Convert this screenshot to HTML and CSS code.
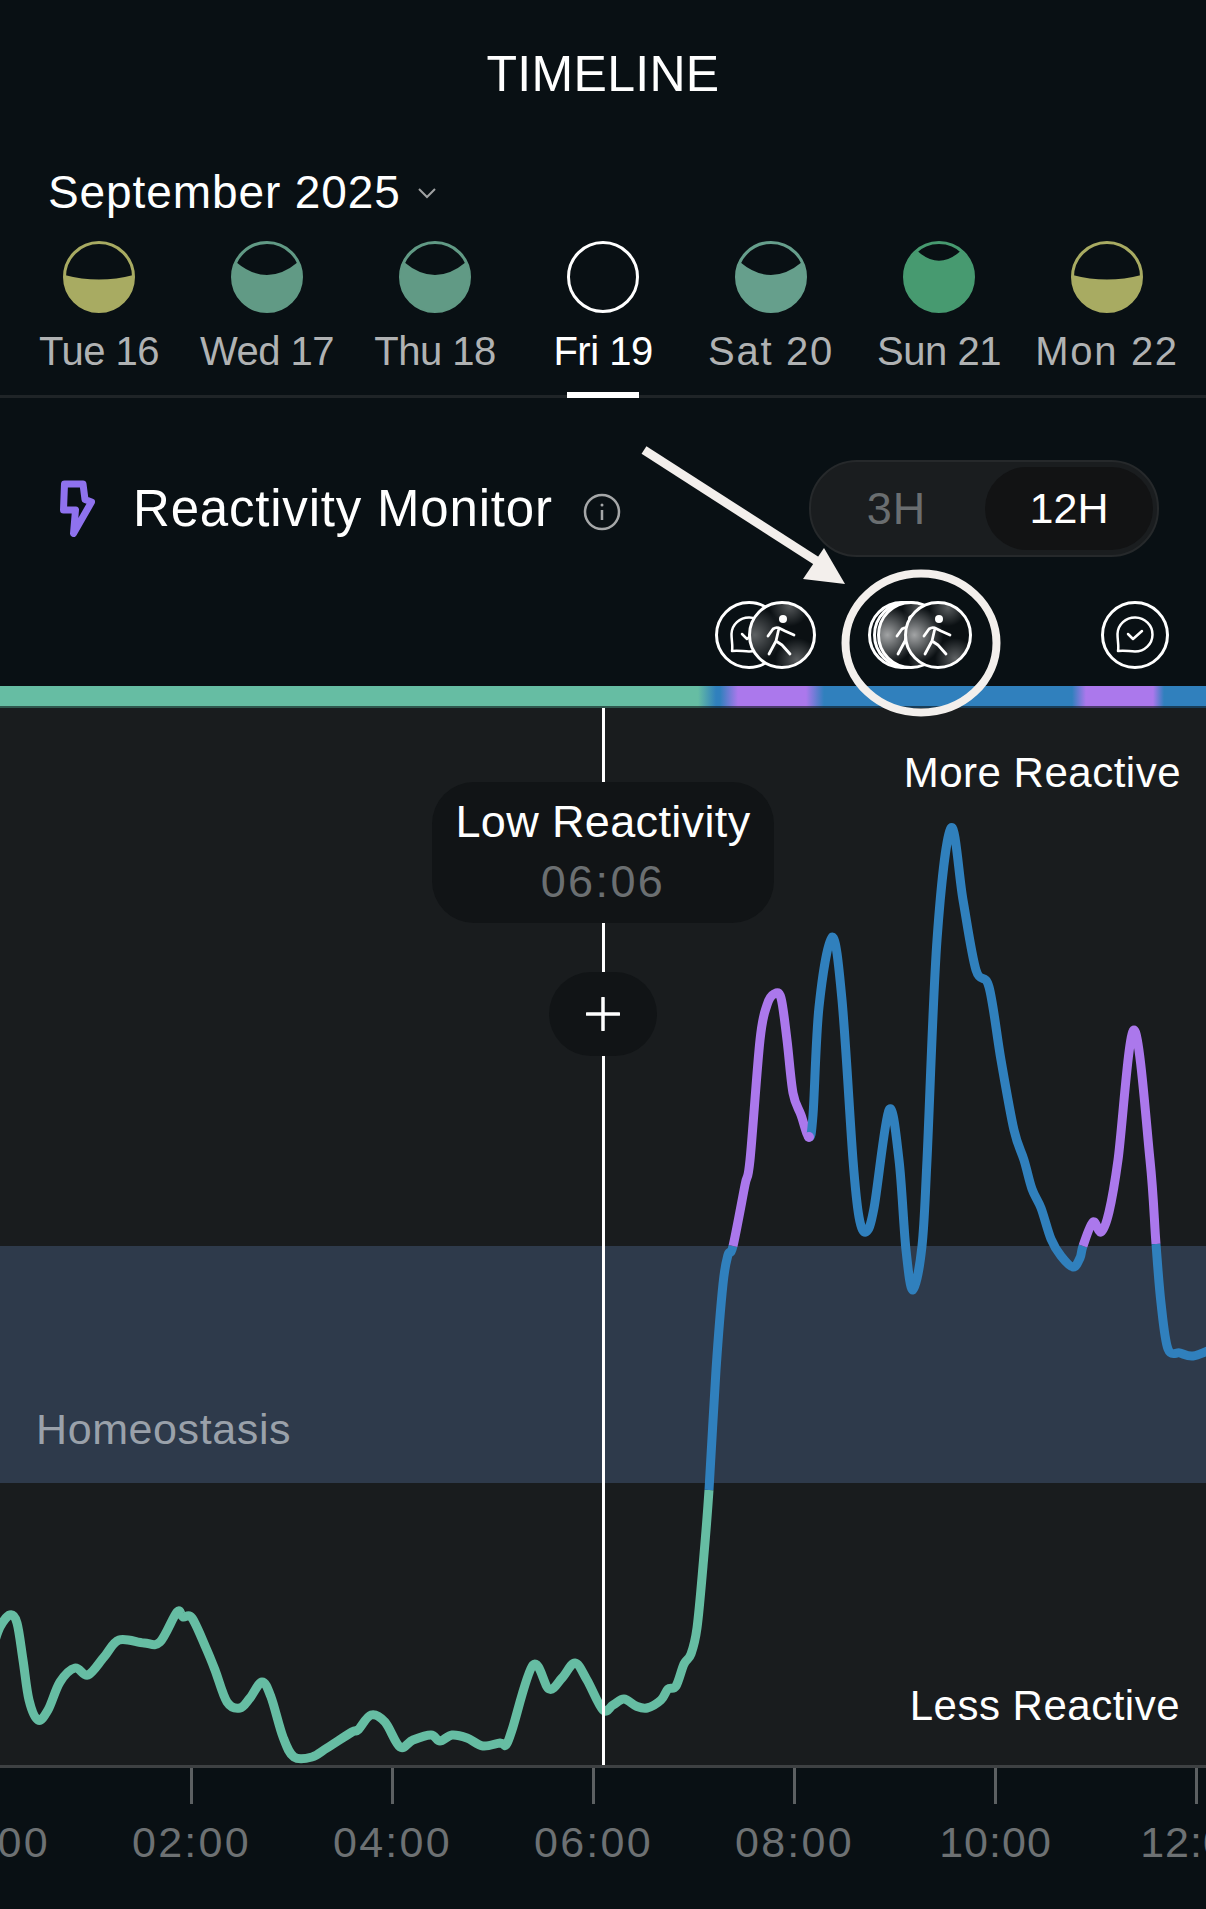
FILE: index.html
```html
<!DOCTYPE html>
<html lang="en">
<head>
  <meta charset="UTF-8" />
  <meta name="viewport" content="width=device-width, initial-scale=1.0"/>
  <title>Timeline</title>
  <link rel="stylesheet" href="styles.css">
</head>
<body>
  <div class="page">
    <h1 class="title">TIMELINE</h1>

    <div class="month">
      <span>September 2025</span>
      <svg class="chevron" width="18" height="11" viewBox="0 0 18 11"><path d="M1 1l8 8 8-8"/></svg>
    </div>

    <div class="days">
      <div class="day">
        <svg class="moon moon-yellow" viewBox="0 0 72 72"><circle cx="36" cy="36" r="34.500"/><path d="M1.560 34Q36 43 70.440 34A34.500 34.500 0 1 1 1.560 34Z"/></svg>
        <span>Tue 16</span>
      </div>
      <div class="day">
        <svg class="moon moon-teal" viewBox="0 0 72 72"><circle cx="36" cy="36" r="34.500"/><path d="M4.930 21Q36 47 67.070 21A34.500 34.500 0 1 1 4.930 21Z"/></svg>
        <span>Wed 17</span>
      </div>
      <div class="day">
        <svg class="moon moon-teal" viewBox="0 0 72 72"><circle cx="36" cy="36" r="34.500"/><path d="M4.930 21Q36 47 67.070 21A34.500 34.500 0 1 1 4.930 21Z"/></svg>
        <span>Thu 18</span>
      </div>
      <div class="day active">
        <svg class="moon moon-empty" viewBox="0 0 72 72"><circle cx="36" cy="36" r="34.500"/></svg>
        <span>Fri 19</span>
      </div>
      <div class="day wide">
        <svg class="moon moon-sage" viewBox="0 0 72 72"><circle cx="36" cy="36" r="34.500"/><path d="M4.930 21Q36 47 67.070 21A34.500 34.500 0 1 1 4.930 21Z"/></svg>
        <span>Sat 20</span>
      </div>
      <div class="day">
        <svg class="moon moon-green" viewBox="0 0 72 72"><circle cx="36" cy="36" r="34.500"/><path d="M13.900 9.500Q36 30 58.100 9.500A34.500 34.500 0 1 1 13.900 9.500Z"/></svg>
        <span>Sun 21</span>
      </div>
      <div class="day wide">
        <svg class="moon moon-yellow" viewBox="0 0 72 72"><circle cx="36" cy="36" r="34.500"/><path d="M1.560 34Q36 43 70.440 34A34.500 34.500 0 1 1 1.560 34Z"/></svg>
        <span>Mon 22</span>
      </div>
    </div>

    <div class="monitor">
      <svg class="bolt" width="35" height="57" viewBox="0 0 35 57"><path d="M4.500 4H23L25 19.500 31.500 22 13.500 53.500 15.500 30H3.500Z"/></svg>
      <h2 class="monitor-title">Reactivity Monitor</h2>
      <svg class="info" width="38" height="38" viewBox="0 0 38 38"><circle cx="19" cy="19" r="17"/><path d="M19 17v10"/><circle class="info-dot" cx="19" cy="12" r="1.500"/></svg>
      <div class="range">
        <span class="range-item">3H</span>
        <span class="range-item selected">12H</span>
      </div>
    </div>

    <div class="events">
      <div class="event-group group-a">
        <div class="event">
          <svg viewBox="0 0 68 68"><path d="M17 50C18 45 16.500 40 16.500 33A17.500 17 0 1 1 34 50.500C28 50.500 24 49 17 50Z"/><path d="M27 33l5 5 9-8"/></svg>
        </div>
        <div class="event glass walker-top">
          <svg viewBox="0 0 68 68"><circle class="head" cx="35" cy="18" r="4"/><path class="figure" d="M20 35l5-7q3-2 6-1l6 3 9 4M31 27l-3 13-7 13M28 40l6 4 8 9"/></svg>
        </div>
      </div>

      <div class="event-group group-b">
        <div class="event"></div>
        <div class="event layer-two"></div>
        <div class="event glass bright layer-three">
          <svg viewBox="0 0 68 68"><circle class="head" cx="35" cy="18" r="4"/><path class="figure" d="M20 35l5-7q3-2 6-1l6 3 9 4M31 27l-3 13-7 13M28 40l6 4 8 9"/></svg>
        </div>
        <div class="event glass bright walker-last">
          <svg viewBox="0 0 68 68"><circle class="head" cx="35" cy="18" r="4"/><path class="figure" d="M20 35l5-7q3-2 6-1l6 3 9 4M31 27l-3 13-7 13M28 40l6 4 8 9"/></svg>
        </div>
      </div>

      <div class="event-group group-c">
        <div class="event">
          <svg viewBox="0 0 68 68"><path d="M17 50C18 45 16.500 40 16.500 33A17.500 17 0 1 1 34 50.500C28 50.500 24 49 17 50Z"/><path d="M27 33l5 5 9-8"/></svg>
        </div>
      </div>
    </div>

    <div class="status-bar"></div>

    <div class="chart">
      <div class="zone zone-top"><span>More Reactive</span></div>
      <div class="zone zone-band"><span>Homeostasis</span></div>
      <div class="zone zone-bottom"><span>Less Reactive</span></div>

      <svg class="curve" id="curve" viewBox="0 708 1206 1057"></svg>
      <div class="cursor"></div>

      <div class="tooltip">
        <div class="tooltip-title">Low Reactivity</div>
        <div class="tooltip-time">06:06</div>
      </div>
      <div class="add">
        <svg width="34" height="34" viewBox="0 0 34 34"><path d="M17 1v32M1 17h32"/></svg>
      </div>
    </div>

    <div class="axis">
      <div class="tick"><i></i><span>00:00</span></div>
      <div class="tick"><i></i><span>02:00</span></div>
      <div class="tick"><i></i><span>04:00</span></div>
      <div class="tick"><i></i><span>06:00</span></div>
      <div class="tick"><i></i><span>08:00</span></div>
      <div class="tick narrow"><i></i><span>10:00</span></div>
      <div class="tick narrow"><i></i><span>12:00</span></div>
    </div>

    <svg class="annotation" viewBox="0 0 1206 1909">
      <path class="arrow-line" d="M644 450L826 567"/>
      <path class="arrow-head" d="M845 584L824 548 803 579Z"/>
      <ellipse class="arrow-ring" cx="921" cy="643" rx="75.500" ry="69.500"/>
    </svg>
  </div>

  <script src="chart.js"></script>
</body>
</html>
```

FILE: styles.css
```css
* {
  box-sizing: border-box;
}
body {
  margin: 0;
  background-color: #091014;
  color: #fff;
  font-family: "Liberation Sans", Arial, sans-serif;
}
.page {
  position: relative;
  width: 1206px;
  height: 1909px;
  overflow: hidden;
}
.title {
  margin: 0;
  padding-top: 44px;
  font-size: 50px;
  font-weight: 400;
  line-height: 60px;
  letter-spacing: 0.3px;
  text-align: center;
}
.month {
  display: flex;
  align-items: center;
  gap: 17px;
  margin-top: 63px;
  padding-left: 48px;
  font-size: 46px;
  line-height: 50px;
  letter-spacing: 0.9px;
}
.chevron {
  margin-top: 3px;
  fill: none;
  stroke: #a0a2a3;
  stroke-width: 2;
}

/* week strip */
.days {
  display: grid;
  grid-template-columns: repeat(7, 168px);
  margin-top: 24px;
  padding: 0 15px 21px;
  border-bottom: 3px solid #1f2427;
}
.day {
  position: relative;
  display: flex;
  flex-direction: column;
  align-items: center;
  gap: 15px;
  font-size: 40px;
  line-height: 46px;
  letter-spacing: -0.5px;
  color: #b0b2b3;
}
.day.wide {
  letter-spacing: 1.7px;
}
.day.active {
  color: #fff;
}
.day.active::after {
  content: "";
  position: absolute;
  left: 48px;
  bottom: -24px;
  width: 72px;
  height: 6px;
  background: #fff;
}
.moon {
  width: 72px;
  height: 72px;
}
.moon-yellow { color: #a8ab62; }
.moon-teal { color: #619a85; }
.moon-sage { color: #669f8c; }
.moon-green { color: #479a70; }
.moon-empty { color: #fff; }
.moon circle {
  fill: none;
  stroke: currentColor;
  stroke-width: 3;
}
.moon path {
  fill: currentColor;
}

/* monitor header */
.monitor {
  display: flex;
  align-items: center;
  margin-top: 62px;
  padding: 0 47px 0 60px;
}
.bolt {
  fill: none;
  stroke: #8f72ee;
  stroke-width: 7;
  stroke-linejoin: round;
}
.monitor-title {
  margin: 0 0 0 38px;
  font-size: 51px;
  font-weight: 400;
  line-height: 60px;
  letter-spacing: 0.8px;
}
.info {
  margin: 6px 0 0 30px;
  fill: none;
  stroke: #a5a7a8;
  stroke-width: 2.500;
}
.info .info-dot {
  fill: #a5a7a8;
  stroke: none;
}
.range {
  display: flex;
  width: 350px;
  height: 97px;
  margin-left: auto;
  padding: 5px 4px;
  background: #1a1d1f;
  border: 2px solid #26292b;
  border-radius: 48px;
}
.range-item {
  display: flex;
  flex: 1;
  align-items: center;
  justify-content: center;
  padding-right: 7px;
  font-size: 45px;
  letter-spacing: 1px;
  color: #6a6e70;
}
.range-item.selected {
  flex: 0 0 168px;
  padding-right: 0;
  background: #121314;
  border-radius: 42px;
  font-size: 43px;
  letter-spacing: 0;
  color: #fff;
}

/* event markers */
.events {
  display: flex;
  height: 68px;
  margin-top: 44px;
  padding-left: 715px;
}
.event-group {
  display: flex;
}
.group-b {
  margin-left: 52px;
}
.group-c {
  margin-left: 129px;
}
.event {
  flex: 0 0 68px;
  height: 68px;
  background: #091014;
  border: 3px solid #fff;
  border-radius: 50%;
}
.event svg {
  display: block;
  width: 68px;
  height: 68px;
  margin: -3px;
  fill: none;
  stroke: #fff;
  stroke-width: 2.500;
  stroke-linecap: round;
  stroke-linejoin: round;
}
.event .figure {
  stroke-width: 2.800;
}
.event .head {
  fill: #fff;
  stroke: none;
}
.glass {
  background:
    radial-gradient(circle at 6% 50%, rgba(255, 255, 255, 0.34), transparent 42%),
    radial-gradient(circle at 62% 4%, rgba(255, 255, 255, 0.3), transparent 28%),
    radial-gradient(circle at 74% 90%, rgba(255, 255, 255, 0.32), transparent 30%),
    #0b1013;
}
.glass.bright {
  background:
    radial-gradient(circle at 12% 50%, rgba(255, 255, 255, 0.62), transparent 46%),
    radial-gradient(circle at 66% 6%, rgba(255, 255, 255, 0.32), transparent 26%),
    radial-gradient(circle at 78% 88%, rgba(255, 255, 255, 0.34), transparent 28%),
    #0b1013;
}
.walker-top {
  margin-left: -35px;
}
.layer-two {
  margin-left: -63px;
}
.layer-three {
  margin-left: -64px;
}
.walker-last {
  margin-left: -41px;
}

/* colour strip above the chart */
.status-bar {
  height: 22px;
  margin-top: 17px;
  border-bottom: 2px solid rgba(10, 16, 20, 0.6);
  background: linear-gradient(90deg,
    #66bda3 698px, #3080bd 716px, #3080bd 720px, #ab78ec 738px,
    #ab78ec 806px, #3080bd 824px, #3080bd 1072px, #ab78ec 1086px,
    #ab78ec 1153px, #3080bd 1164px);
}

/* chart */
.chart {
  position: relative;
  display: flex;
  flex-direction: column;
  height: 1060px;
  background: #191c1e;
  border-bottom: 3px solid #3e4143;
  font-size: 42px;
  line-height: 48px;
  letter-spacing: 0.5px;
}
.zone {
  display: flex;
}
.zone-top {
  height: 538px;
  justify-content: flex-end;
  padding: 41px 25px 0 0;
}
.zone-band {
  height: 237px;
  padding: 159px 0 0 36px;
  background: #2e3a4b;
  color: #9aa1aa;
  font-size: 43px;
  letter-spacing: 0.6px;
}
.zone-bottom {
  height: 282px;
  align-items: flex-end;
  justify-content: flex-end;
  padding: 0 26px 35px 0;
}
.curve {
  position: absolute;
  top: 0;
  left: 0;
  width: 1206px;
  height: 1057px;
}
.cursor {
  position: absolute;
  top: 0;
  left: 602px;
  width: 3px;
  height: 1057px;
  background: #fff;
}
.tooltip {
  position: absolute;
  top: 74px;
  left: 432px;
  width: 342px;
  height: 141px;
  padding-top: 10px;
  background: #111416;
  border-radius: 42px;
  font-size: 45px;
  line-height: 60px;
  letter-spacing: 0.35px;
  text-align: center;
}
.tooltip-time {
  letter-spacing: 2.4px;
  color: #6b6f71;
}
.add {
  position: absolute;
  top: 264px;
  left: 549px;
  display: flex;
  align-items: center;
  justify-content: center;
  width: 108px;
  height: 84px;
  background: #111416;
  border-radius: 42px;
}
.add svg {
  fill: none;
  stroke: #fff;
  stroke-width: 3.500;
  stroke-linecap: round;
}

/* time axis */
.axis {
  display: flex;
  width: 1407px;
  margin-left: -110px;
}
.tick {
  display: flex;
  flex: 0 0 201px;
  flex-direction: column;
  align-items: center;
  font-size: 43px;
  line-height: 48px;
  letter-spacing: 2.300px;
  color: #6d7173;
}
.tick.narrow {
  letter-spacing: 1px;
}
.tick i {
  width: 3px;
  height: 36px;
  margin-bottom: 14px;
  background: #5c6062;
}

/* hand drawn arrow and ring on top of the screenshot */
.annotation {
  position: absolute;
  top: 0;
  left: 0;
  width: 1206px;
  height: 1909px;
  pointer-events: none;
}
.arrow-line {
  fill: none;
  stroke: #f3efec;
  stroke-width: 9;
}
.arrow-head {
  fill: #f3efec;
}
.arrow-ring {
  fill: none;
  stroke: #f3efec;
  stroke-width: 8;
}
```

FILE: chart.js
```js
const GREEN = "#66bda3";
const BLUE = "#3080bd";
const PURPLE = "#ab78ec";

// each run starts where the one before it stopped
const runs = [
  { color: GREEN, points: [[-8,1650],[0,1627],[10,1615],[17,1623],[23,1660],[29,1700],[38,1720],[48,1710],[60,1682],[75,1668],[88,1675],[104,1657],[119,1640],[144,1643],[160,1642],[177,1612],[183,1617],[192,1618],[206,1648],[215,1670],[227,1702],[240,1708],[250,1698],[262,1682],[271,1697],[283,1737],[294,1757],[312,1757],[327,1748],[352,1732],[358,1730],[371,1715],[385,1722],[400,1747],[413,1740],[431,1735],[440,1741],[452,1735],[467,1738],[483,1746],[500,1743],[506,1745],[512,1730],[533,1665],[549,1689],[562,1678],[575,1663],[587,1680],[603,1710],[613,1705],[624,1699],[636,1706],[647,1708],[661,1700],[668,1689],[676,1686],[684,1664],[691,1654],[697,1628],[703,1566],[709,1490]] },
  { color: BLUE, points: [[716,1370],[723,1284],[728,1255],[733,1246]] },
  { color: PURPLE, dot: true, points: [[745,1185],[750,1160],[760,1040],[767,1005],[774,994],[781,998],[787,1040],[793,1093],[801,1115],[809,1137]] },
  { color: BLUE, points: [[813,1115],[819,1007],[832,937],[842,1000],[853,1160],[859,1217],[866,1232],[874,1208],[889,1110],[899,1160],[906,1250],[913,1290],[922,1246],[927,1160],[937,940],[951,828],[963,900],[976,970],[989,987],[1001,1060],[1014,1130],[1024,1160],[1032,1189],[1041,1208],[1051,1239],[1061,1256],[1073,1267],[1080,1258],[1083,1246]] },
  { color: PURPLE, points: [[1093,1222],[1101,1232],[1109,1212],[1118,1160],[1134,1030],[1150,1160],[1156,1244]] },
  { color: BLUE, points: [[1161,1303],[1168,1349],[1180,1353],[1193,1356],[1212,1349]] }
];

const NS = "http://www.w3.org/2000/svg";
const svg = document.getElementById("curve");

// flatten so the tangents carry across the colour changes
const all = [];
runs.forEach(function (run) {
  run.start = Math.max(all.length - 1, 0);
  run.points.forEach(function (p) { all.push(p); });
  run.end = all.length - 1;
});

function pathFor(from, to) {
  let d = "M" + all[from][0] + " " + all[from][1];
  for (let i = from; i < to; i++) {
    const p0 = all[i - 1] || all[i];
    const p1 = all[i];
    const p2 = all[i + 1];
    const p3 = all[i + 2] || p2;
    const c1x = p1[0] + (p2[0] - p0[0]) / 6;
    const c1y = p1[1] + (p2[1] - p0[1]) / 6;
    const c2x = p2[0] - (p3[0] - p1[0]) / 6;
    const c2y = p2[1] - (p3[1] - p1[1]) / 6;
    d += " C" + c1x + " " + c1y + " " + c2x + " " + c2y + " " + p2[0] + " " + p2[1];
  }
  return d;
}

runs.forEach(function (run) {
  const path = document.createElementNS(NS, "path");
  path.setAttribute("d", pathFor(run.start, run.end));
  path.setAttribute("fill", "none");
  path.setAttribute("stroke", run.color);
  path.setAttribute("stroke-width", "9");
  path.setAttribute("stroke-linejoin", "round");
  svg.appendChild(path);
});

// the purple run that dips into the valley ends on a round tip
runs.filter(function (run) { return run.dot; }).forEach(function (run) {
  const last = all[run.end];
  const dot = document.createElementNS(NS, "circle");
  dot.setAttribute("cx", last[0]);
  dot.setAttribute("cy", last[1]);
  dot.setAttribute("r", "5");
  dot.setAttribute("fill", run.color);
  svg.appendChild(dot);
});
```
